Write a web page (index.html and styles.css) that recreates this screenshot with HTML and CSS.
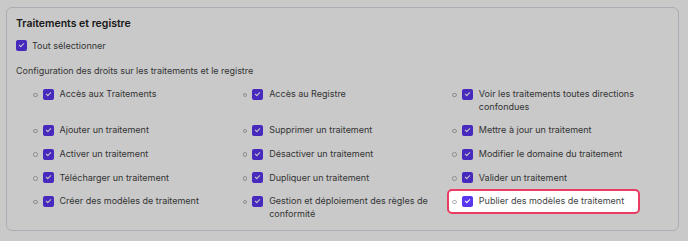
FILE: index.html
```html
<!DOCTYPE html>
<html lang="fr">
<head>
<meta charset="UTF-8">
<meta name="viewport" content="width=device-width, initial-scale=1.0">
<title>Traitements et registre</title>
<link rel="stylesheet" href="styles.css">
</head>
<body>

<section class="rights-card">
  <h2 class="rights-title">Traitements et registre</h2>

  <label class="check-row select-all">
    <span class="box"></span>
    <span>Tout sélectionner</span>
  </label>

  <p class="rights-desc">Configuration des droits sur les traitements et le registre</p>

  <ul class="rights-list">
    <li><span class="box"></span><span>Accès aux Traitements</span></li>
    <li><span class="box"></span><span>Accès au Registre</span></li>
    <li><span class="box"></span><span>Voir les traitements toutes directions confondues</span></li>
    <li><span class="box"></span><span>Ajouter un traitement</span></li>
    <li><span class="box"></span><span>Supprimer un traitement</span></li>
    <li><span class="box"></span><span>Mettre à jour un traitement</span></li>
    <li><span class="box"></span><span>Activer un traitement</span></li>
    <li><span class="box"></span><span>Désactiver un traitement</span></li>
    <li><span class="box"></span><span>Modifier le domaine du traitement</span></li>
    <li><span class="box"></span><span>Télécharger un traitement</span></li>
    <li><span class="box"></span><span>Dupliquer un traitement</span></li>
    <li><span class="box"></span><span>Valider un traitement</span></li>
    <li><span class="box"></span><span>Créer des modèles de traitement</span></li>
    <li><span class="box"></span><span>Gestion et déploiement des règles de conformité</span></li>
    <li class="spot"><span class="box"></span><span>Publier des modèles de traitement</span></li>
  </ul>
</section>

</body>
</html>
```

FILE: styles.css
```css
html {
  height: 100%;
}

body {
  margin: 0;
  min-height: 100%;
  padding: 7px 9px 0 6px;
  box-sizing: border-box;
  background: #fff;
  font-family: Inter, "Noto Sans", sans-serif;
  color: #444;
  font-size: 9px;
  line-height: 12.5px;
}

.rights-card {
  border: 1px solid #dcdbe5;
  border-radius: 6px;
  padding: 9px 16px 9px 9px;
  height: 224px;
  box-sizing: border-box;
}

.rights-title {
  margin: 0;
  font-size: 10.5px;
  line-height: 14px;
  font-weight: 600;
  color: #222;
}

.check-row {
  display: flex;
  align-items: center;
  gap: 5px;
}

.select-all {
  margin-top: 8px;
  line-height: 13px;
}

.rights-desc {
  margin: 12px 0 0;
  line-height: 13px;
  letter-spacing: -0.03px;
}

/* checkbox drawn by hand */
.box {
  flex-shrink: 0;
  width: 11px;
  height: 11px;
  border-radius: 2px;
  background: #5a36f0;
  position: relative;
}

.box::after {
  content: "";
  position: absolute;
  left: 3px;
  top: 3px;
  width: 4px;
  height: 2px;
  border-left: 1.6px solid #fff;
  border-bottom: 1.6px solid #fff;
  transform: rotate(-45deg);
}

.rights-list {
  list-style: none;
  margin: 11px 0 0;
  padding: 0 0 0 17px;
  display: grid;
  grid-template-columns: repeat(3, 1fr);
  row-gap: 11.2px;
}

.rights-list li {
  display: flex;
  align-items: flex-start;
  gap: 6px;
}

.rights-list li::before {
  content: "";
  flex-shrink: 0;
  width: 2.5px;
  height: 2.5px;
  margin-top: 4.5px;
  margin-right: -1px;
  border: 1px solid #b5b5b5;
  border-radius: 50%;
}

.rights-list li .box {
  margin-top: 0.75px;
}

/* onboarding spotlight */
.rights-list li.spot {
  justify-self: start;
  align-self: start;
  position: relative;
  z-index: 2;
  background: #fff;
  border: 2px solid #ea3b63;
  border-radius: 5px;
  padding: 4px 14px 4px 3px;
  margin: -6px -16px -6px -5px;
  box-shadow: 0 0 0 1500px rgba(0, 0, 0, 0.21);
}
```
